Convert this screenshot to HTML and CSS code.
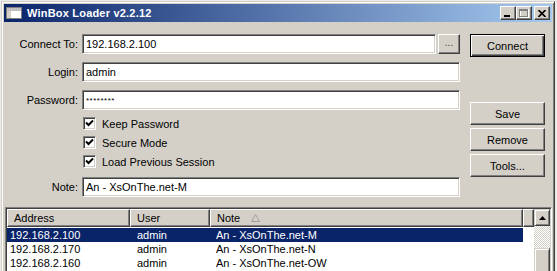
FILE: index.html
```html
<!DOCTYPE html>
<html lang="en">
<head>
    <meta charset="UTF-8">
    <title>WinBox Loader v2.2.12</title>
    <link rel="stylesheet" href="styles.css">
</head>
<body>
    <div class="window">
        <div class="titlebar">
            <svg class="app-icon" width="16" height="14" viewBox="0 0 16 14">
                <rect x="0.5" y="1.5" width="15" height="11" fill="#fff" stroke="#808080"/>
                <rect x="1" y="2" width="14" height="3" fill="#c0c0c0"/>
                <rect x="1" y="5" width="4" height="7" fill="#d4d0c8"/>
            </svg>
            <span class="title">WinBox Loader v2.2.12</span>
            <div class="caption-buttons">
                <span class="cap-btn">
                    <svg width="8" height="7" viewBox="0 0 8 7"><rect x="0" y="5" width="6" height="2" fill="#000"/></svg>
                </span>
                <span class="cap-btn">
                    <svg width="10" height="9" viewBox="0 0 10 9">
                        <rect x="1.5" y="0.5" width="8" height="8" fill="none" stroke="#fff"/>
                        <rect x="0.5" y="0.5" width="8" height="7" fill="none" stroke="#808080"/>
                        <rect x="1" y="1" width="7" height="1" fill="#808080"/>
                    </svg>
                </span>
                <span class="cap-btn close">
                    <svg width="8" height="7" viewBox="0 0 8 7">
                        <path d="M0.5 0 L7.5 7 M7.5 0 L0.5 7" stroke="#000" stroke-width="1.6"/>
                    </svg>
                </span>
            </div>
        </div>

        <div class="content">
            <div class="top">
                <div class="form">
                    <div class="row">
                        <label class="lbl">Connect To:</label>
                        <input class="field grow" type="text" value="192.168.2.100">
                        <button class="dots">...</button>
                    </div>
                    <div class="row">
                        <label class="lbl">Login:</label>
                        <input class="field grow" type="text" value="admin">
                    </div>
                    <div class="row pw-row">
                        <label class="lbl">Password:</label>
                        <input class="field grow pw" type="text" value="********">
                    </div>
                    <div class="check-row">
                        <span class="box"><svg width="9" height="9" viewBox="0 0 9 9"><path d="M1 3.5 L3.5 6 L8 1.5" fill="none" stroke="#000" stroke-width="2"/></svg></span>
                        Keep Password
                    </div>
                    <div class="check-row">
                        <span class="box"><svg width="9" height="9" viewBox="0 0 9 9"><path d="M1 3.5 L3.5 6 L8 1.5" fill="none" stroke="#000" stroke-width="2"/></svg></span>
                        Secure Mode
                    </div>
                    <div class="check-row">
                        <span class="box"><svg width="9" height="9" viewBox="0 0 9 9"><path d="M1 3.5 L3.5 6 L8 1.5" fill="none" stroke="#000" stroke-width="2"/></svg></span>
                        Load Previous Session
                    </div>
                    <div class="row note-row">
                        <label class="lbl">Note:</label>
                        <input class="field grow" type="text" value="An - XsOnThe.net-M">
                    </div>
                </div>

                <div class="actions">
                    <button class="btn default">Connect</button>
                    <button class="btn save">Save</button>
                    <button class="btn">Remove</button>
                    <button class="btn">Tools...</button>
                </div>
            </div>

            <div class="listview">
                <div class="lv-main">
                    <div class="lv-head">
                        <span class="hcell col-addr">Address</span>
                        <span class="hcell col-user">User</span>
                        <span class="hcell col-note">Note
                            <svg class="sort" width="9" height="8" viewBox="0 0 9 8"><path d="M4.5 0.5 L8.5 7.5 L0.5 7.5 Z" fill="none" stroke="#a0a0a0"/></svg>
                        </span>
                        <span class="hcell filler"></span>
                    </div>
                    <div class="lv-row selected">
                        <span class="cell col-addr">192.168.2.100</span>
                        <span class="cell col-user">admin</span>
                        <span class="cell col-note">An - XsOnThe.net-M</span>
                    </div>
                    <div class="lv-row">
                        <span class="cell col-addr">192.168.2.170</span>
                        <span class="cell col-user">admin</span>
                        <span class="cell col-note">An - XsOnThe.net-N</span>
                    </div>
                    <div class="lv-row">
                        <span class="cell col-addr">192.168.2.160</span>
                        <span class="cell col-user">admin</span>
                        <span class="cell col-note">An - XsOnThe.net-OW</span>
                    </div>
                </div>
                <div class="scrollbar">
                    <span class="sb-btn">
                        <svg width="7" height="4" viewBox="0 0 7 4"><path d="M3.5 0 L7 4 L0 4 Z" fill="#000"/></svg>
                    </span>
                    <span class="sb-track"></span>
                    <span class="sb-thumb"></span>
                </div>
            </div>
        </div>
    </div>
</body>
</html>
```

FILE: styles.css
```css
* {
    box-sizing: border-box;
}
html, body {
    margin: 0;
    height: 100%;
}
body {
    background: #ebebeb;
    font-family: "Liberation Sans", Arial, sans-serif;
    font-size: 11px;
    color: #000;
    overflow: hidden;
}
.window {
    margin: 1px 0 0 1px;
    width: 554px;
    height: 290px;
    background: #d4d0c8;
    border: 1px solid;
    border-color: #d4d0c8 #404040 #404040 #d4d0c8;
    box-shadow: inset 1px 1px #fff, inset -1px -1px #808080;
    padding: 2px;
}
.titlebar {
    height: 18px;
    display: flex;
    align-items: center;
    background: linear-gradient(to right, #0a246a, #a6caf0);
    color: #fff;
    padding: 0 2px 0 2px;
}
.app-icon {
    margin-right: 5px;
}
.title {
    flex: 1;
    font-weight: bold;
    font-size: 11px;
    letter-spacing: 0.2px;
}
.caption-buttons {
    display: flex;
}
.cap-btn {
    width: 16px;
    height: 14px;
    display: flex;
    align-items: center;
    justify-content: center;
    background: #d4d0c8;
    border: 1px solid;
    border-color: #fff #404040 #404040 #fff;
    box-shadow: inset -1px -1px #808080;
}
.cap-btn.close {
    margin-left: 2px;
}

.content {
    padding-top: 12px;
}
.top {
    display: flex;
    padding-right: 6px;
}
.form {
    width: 456px;
}
.row {
    display: flex;
    align-items: center;
    height: 20px;
    margin-bottom: 8px;
}
.pw-row {
    margin-bottom: 4px;
}
.note-row {
    margin: 6px 0 0;
}
.lbl {
    width: 74px;
    margin-right: 4px;
    text-align: right;
}
.field {
    height: 20px;
    padding: 0 3px;
    font-family: inherit;
    font-size: 11px;
    color: #000;
    background: #fff;
    border: 1px solid;
    border-color: #808080 #fff #fff #808080;
    box-shadow: inset 1px 1px #404040, inset -1px -1px #d4d0c8;
    outline: none;
}
.grow {
    flex: 1;
    min-width: 0;
}
.pw {
    font-size: 8px;
    letter-spacing: 0.5px;
}
.dots {
    width: 22px;
    height: 20px;
    margin-left: 2px;
    padding: 0 0 4px;
    font-family: inherit;
    font-size: 10px;
    color: #404040;
    background: #d4d0c8;
    border: 1px solid;
    border-color: #fff #404040 #404040 #fff;
    box-shadow: inset -1px -1px #808080;
}
.check-row {
    display: flex;
    align-items: center;
    height: 19px;
    padding-left: 79px;
}
.box {
    width: 13px;
    height: 13px;
    margin-right: 6px;
    display: flex;
    align-items: center;
    justify-content: center;
    background: #fff;
    border: 1px solid;
    border-color: #808080 #fff #fff #808080;
    box-shadow: inset 1px 1px #404040, inset -1px -1px #d4d0c8;
}

.actions {
    width: 75px;
    margin-left: 10px;
    display: flex;
    flex-direction: column;
    gap: 3px;
}
.btn {
    height: 23px;
    padding: 0;
    font-family: inherit;
    font-size: 11px;
    color: #000;
    background: #d4d0c8;
    border: 1px solid;
    border-color: #fff #404040 #404040 #fff;
    box-shadow: inset -1px -1px #808080;
}
.btn.default {
    border-color: #000;
    box-shadow: inset 1px 1px #fff, inset -1px -1px #404040, inset -2px -2px #808080;
}
.btn.save {
    margin-top: 42px;
}

.listview {
    display: flex;
    height: 80px;
    margin: 10px 0 0 1px;
    background: #fff;
    border: 1px solid;
    border-color: #808080 #fff #fff #808080;
    box-shadow: inset 1px 1px #404040, inset -1px -1px #d4d0c8;
    padding: 1px;
}
.lv-main {
    flex: 1;
}
.lv-head {
    display: flex;
    height: 18px;
}
.hcell {
    display: flex;
    align-items: center;
    padding-left: 6px;
    background: #d4d0c8;
    border: 1px solid;
    border-color: #fff #404040 #404040 #fff;
    box-shadow: inset -1px -1px #808080;
}
.lv-head .col-addr {
    width: 123px;
}
.lv-head .col-user {
    width: 80px;
}
.lv-head .col-note {
    width: 313px;
}
.filler {
    flex: 1;
}
.sort {
    margin-left: 11px;
}
.lv-row {
    display: flex;
    align-items: center;
    width: 516px;
    height: 14px;
}
.lv-head + .lv-row {
    margin-top: 1px;
}
.lv-row.selected {
    background: #0a246a;
    color: #fff;
}
.cell {
    white-space: nowrap;
}
.lv-row .col-addr {
    width: 123px;
    padding-left: 3px;
}
.lv-row .col-user {
    width: 80px;
    padding-left: 7px;
}
.lv-row .col-note {
    width: 313px;
    padding-left: 6px;
}
.scrollbar {
    width: 16px;
    display: flex;
    flex-direction: column;
    background: repeating-conic-gradient(#d4d0c8 0 25%, #fff 0 50%) 0 0 / 2px 2px;
}
.sb-btn {
    height: 17px;
    display: flex;
    align-items: center;
    justify-content: center;
    background: #d4d0c8;
    border: 1px solid;
    border-color: #d4d0c8 #404040 #404040 #d4d0c8;
    box-shadow: inset 1px 1px #fff, inset -1px -1px #808080;
}
.sb-track {
    height: 22px;
}
.sb-thumb {
    flex: 1;
    background: #d4d0c8;
    border: 1px solid;
    border-color: #d4d0c8 #404040 #404040 #d4d0c8;
    box-shadow: inset 1px 1px #fff, inset -1px -1px #808080;
}
```
